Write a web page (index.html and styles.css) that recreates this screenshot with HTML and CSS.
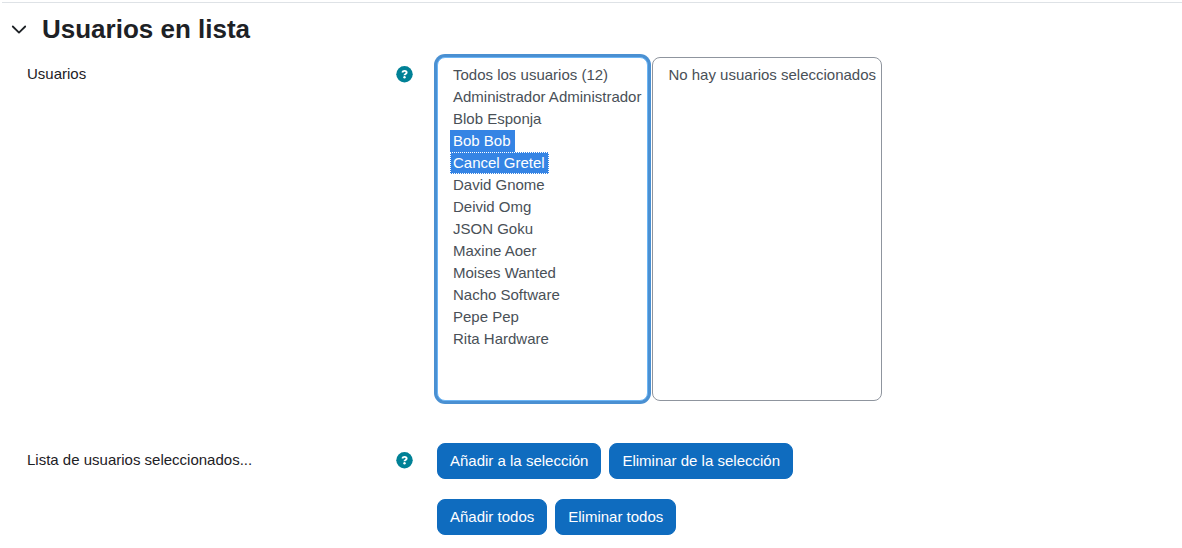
FILE: index.html
```
<!DOCTYPE html>
<html lang="es">
<head>
<meta charset="utf-8">
<meta name="viewport" content="width=device-width, initial-scale=1">
<title>Usuarios en lista</title>
<link rel="stylesheet" href="styles.css">
</head>
<body>
<form class="section">
  <header class="section-header">
    <button type="button" class="toggle" aria-label="Contraer" aria-expanded="true">
      <svg width="16" height="16" viewBox="0 0 16 16" fill="none" stroke="currentColor" stroke-width="1.8" stroke-linecap="round" stroke-linejoin="round"><path d="M1.800 5.500 8 11.600l6.200-6.100"/></svg>
    </button>
    <h3 class="section-title">Usuarios en lista</h3>
  </header>

  <div class="row">
    <div class="row-label">
      <label for="available">Usuarios</label>
      <button type="button" class="help" aria-label="Ayuda">
        <svg width="17" height="17" viewBox="0 0 512 512"><circle cx="256" cy="248" r="248" fill="currentColor"/><path d="M190 196c10-34 34-50 68-50 38 0 62 20 62 50 0 44-64 42-64 84" fill="none" stroke="#fff" stroke-width="58"/><circle cx="256" cy="338" r="36" fill="#fff"/></svg>
      </button>
    </div>
    <div class="lists">
      <select id="available" class="list list-active" multiple size="15">
        <option>Todos los usuarios (12)</option>
        <option>Administrador Administrador</option>
        <option>Blob Esponja</option>
        <option selected>Bob Bob</option>
        <option selected class="current">Cancel Gretel</option>
        <option>David Gnome</option>
        <option>Deivid Omg</option>
        <option>JSON Goku</option>
        <option>Maxine Aoer</option>
        <option>Moises Wanted</option>
        <option>Nacho Software</option>
        <option>Pepe Pep</option>
        <option>Rita Hardware</option>
      </select>
      <select class="list" multiple size="15" aria-label="Usuarios seleccionados">
        <option>No hay usuarios seleccionados</option>
      </select>
    </div>
  </div>

  <div class="row row-actions">
    <div class="row-label">
      <span>Lista de usuarios seleccionados...</span>
      <button type="button" class="help" aria-label="Ayuda">
        <svg width="17" height="17" viewBox="0 0 512 512"><circle cx="256" cy="248" r="248" fill="currentColor"/><path d="M190 196c10-34 34-50 68-50 38 0 62 20 62 50 0 44-64 42-64 84" fill="none" stroke="#fff" stroke-width="58"/><circle cx="256" cy="338" r="36" fill="#fff"/></svg>
      </button>
    </div>
    <div class="actions">
      <div class="action-group">
        <button type="button" class="btn">Añadir a la selección</button>
        <button type="button" class="btn">Eliminar de la selección</button>
      </div>
      <div class="action-group">
        <button type="button" class="btn">Añadir todos</button>
        <button type="button" class="btn">Eliminar todos</button>
      </div>
    </div>
  </div>
</form>
</body>
</html>
```

FILE: styles.css
```
*,
*::before,
*::after {
  box-sizing: border-box;
}

body {
  margin: 0;
  background: #fff;
  color: #1d2125;
  font: 15px/22px "Liberation Sans", Arial, sans-serif;
}

.section {
  margin: 2px 0 0 2px;
  padding: 10px 8px 12px 9px;
  border-top: 1px solid #dee2e6;
}

.section-header {
  display: flex;
  align-items: center;
  gap: 15px;
}

.toggle,
.help {
  display: flex;
  padding: 0;
  border: 0;
  background: none;
  color: inherit;
}

.help {
  color: #008196;
}

.section-title {
  margin: 0;
  font-size: 26px;
  line-height: 32px;
}

.row {
  display: grid;
  grid-template-columns: 386px 1fr;
  gap: 24px;
  margin: 12px 0 0 16px;
}

.row-actions {
  margin-top: 42px;
}

.row-label {
  display: flex;
  align-items: center;
  justify-content: space-between;
  align-self: start;
  padding-top: 6px;
}

.lists {
  display: flex;
  gap: 4px;
}

.list {
  height: 344px;
  padding: 6px 1px 6px 12px;
  overflow: hidden;
  border: 1px solid #8f959e;
  border-radius: 8px;
  outline: 0;
  background: #fff;
  color: #495057;
  font: inherit;
}

.list option {
  width: fit-content;
  min-height: 22px;
  padding: 2px 4px 0 3px;
}

.list option:checked {
  background-image: linear-gradient(#3584e4, #3584e4);
  -webkit-text-fill-color: #fff;
}

.list .current {
  outline: 1px dotted #fff;
  outline-offset: -1px;
}

.list-active {
  padding-right: 2px;
  border-color: #6cb5f5;
  box-shadow: 0 0 0 3px #4a90d2;
}

.actions {
  display: grid;
  gap: 20px;
}

.action-group {
  display: flex;
  flex-wrap: wrap;
  gap: 8px;
}

.btn {
  padding: 6px 12px;
  border: 1px solid #0f6cbf;
  border-radius: 8px;
  background: #0f6cbf;
  color: #fff;
  font: inherit;
  line-height: 22px;
}

@media (max-width: 900px) {
  .row {
    grid-template-columns: 1fr;
    gap: 8px;
  }

  .lists {
    flex-wrap: wrap;
  }
}
```
